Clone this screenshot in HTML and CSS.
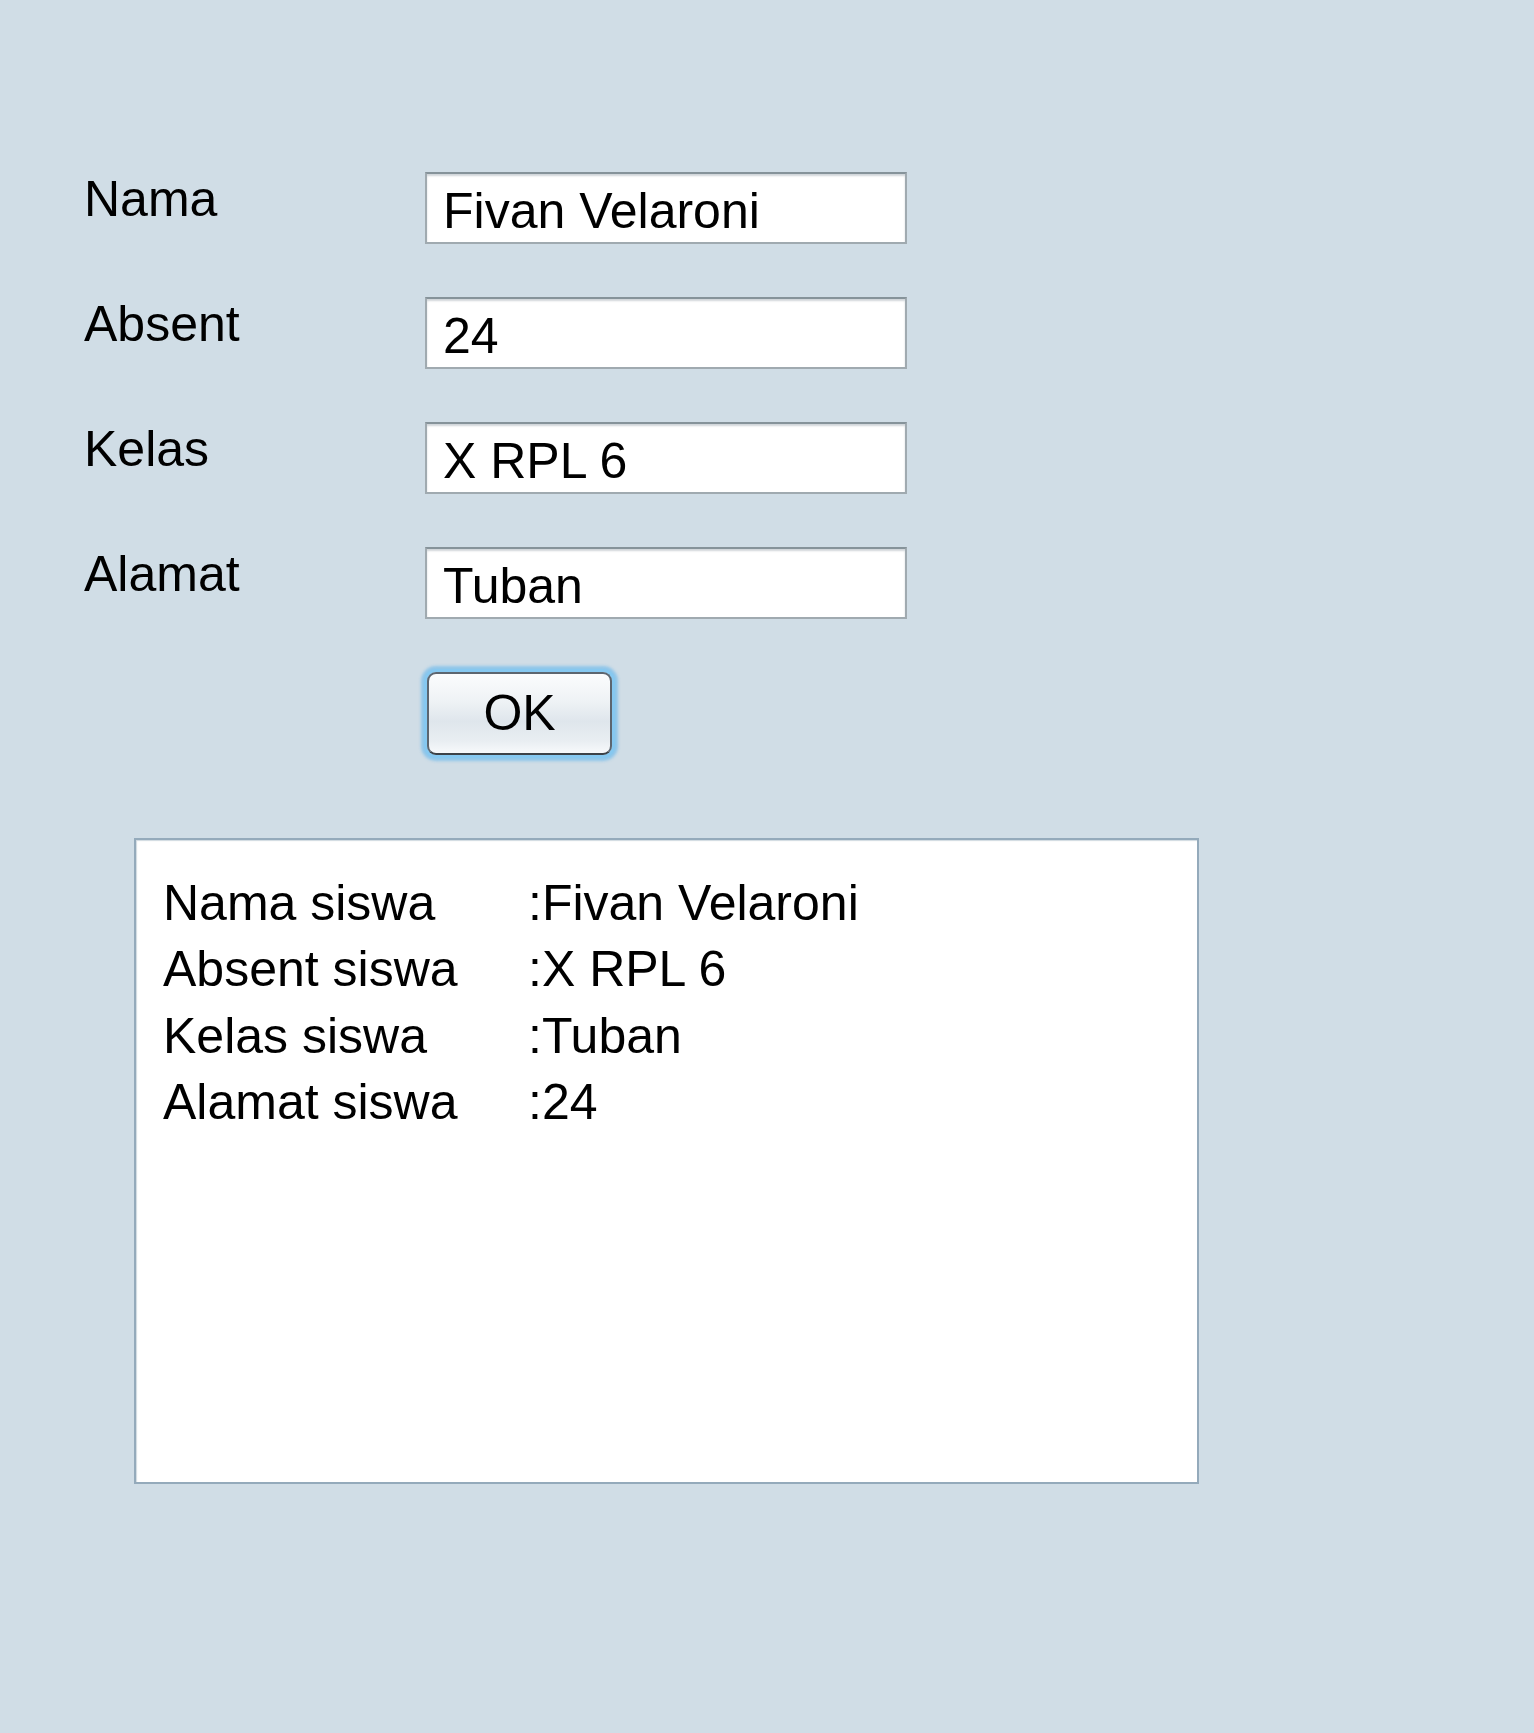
FILE: index.html
```html
<!DOCTYPE html>
<html>
<head>
<meta charset="utf-8">
<title>Form Siswa</title>
<link rel="stylesheet" href="styles.css">
</head>
<body>
<div class="form">
  <div class="rows">
    <div class="row">
      <div class="label">Nama</div>
      <div class="field">Fivan Velaroni</div>
    </div>
    <div class="row">
      <div class="label">Absent</div>
      <div class="field">24</div>
    </div>
    <div class="row">
      <div class="label">Kelas</div>
      <div class="field">X RPL 6</div>
    </div>
    <div class="row">
      <div class="label">Alamat</div>
      <div class="field">Tuban</div>
    </div>
  </div>
  <button class="ok">OK</button>
  <div class="output">
    <div class="line"><span class="key">Nama siswa</span><span class="val">:Fivan Velaroni</span></div>
    <div class="line"><span class="key">Absent siswa</span><span class="val">:X RPL 6</span></div>
    <div class="line"><span class="key">Kelas siswa</span><span class="val">:Tuban</span></div>
    <div class="line"><span class="key">Alamat siswa</span><span class="val">:24</span></div>
  </div>
</div>
</body>
</html>
```

FILE: styles.css
```css
html, body {
  margin: 0;
  padding: 0;
  background: #d0dde6;
}
body {
  width: 1534px;
  min-height: 1733px;
  font-family: "Liberation Sans", Arial, sans-serif;
  color: #000;
}
.form {
  padding: 170px 0 0 84px;
  display: flex;
  flex-direction: column;
  align-items: flex-start;
}
.rows {
  display: flex;
  flex-direction: column;
  gap: 51px;
}
.row {
  display: flex;
  align-items: flex-start;
}
.label {
  width: 341px;
  font-size: 50px;
  line-height: 58px;
}
.field {
  box-sizing: border-box;
  width: 482px;
  height: 72px;
  margin-top: 2px;
  padding: 8px 14px 0 16px;
  background: #fff;
  border: 2px solid #a0aab0;
  border-top-color: #86939a;
  box-shadow: inset 0 2px 2px rgba(120, 135, 145, 0.35);
  font-size: 50px;
  line-height: 58px;
  white-space: nowrap;
}
.ok {
  box-sizing: border-box;
  margin: 53px 0 0 343px;
  width: 185px;
  height: 83px;
  padding: 0;
  border: 2px solid #5c6670;
  border-bottom-color: #3c4248;
  border-radius: 9px;
  background: linear-gradient(to bottom, #fbfcfd 0%, #eef2f5 35%, #dfe6ec 60%, #e9eef2 85%, #f7f9fb 100%);
  box-shadow: 0 0 0 3px #86c8f0, 0 0 3px 6px rgba(120, 190, 235, 0.75);
  font-family: "Liberation Sans", Arial, sans-serif;
  font-size: 50px;
  line-height: 79px;
  color: #000;
}
.output {
  box-sizing: border-box;
  margin: 83px 0 0 50px;
  width: 1065px;
  height: 646px;
  padding: 30px 0 0 27px;
  background: #fff;
  border: 2px solid #94aabb;
  box-shadow: inset 1px 1px 1px rgba(120, 145, 165, 0.35);
}
.line {
  display: flex;
  font-size: 50px;
  line-height: 66.3px;
  white-space: nowrap;
}
.key {
  width: 365px;
}
```
